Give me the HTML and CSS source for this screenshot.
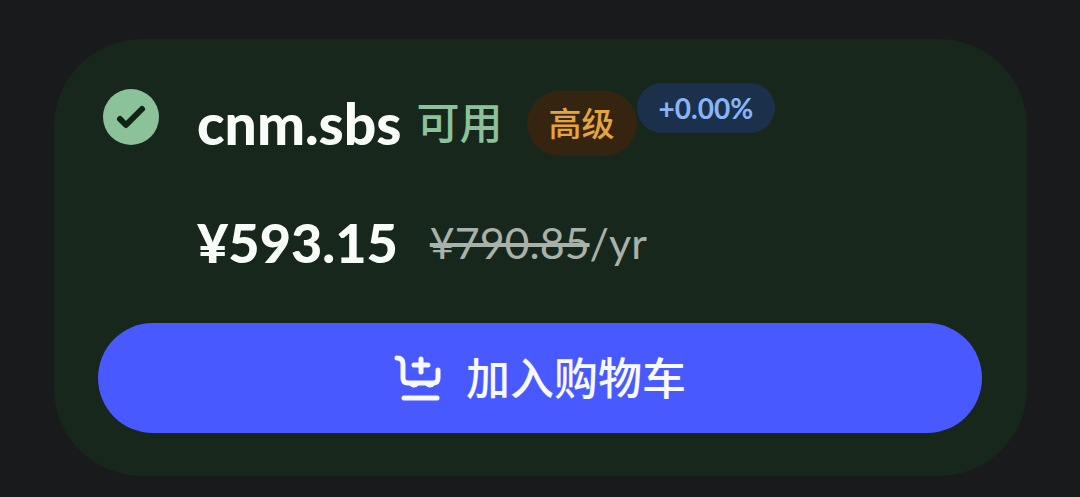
FILE: index.html
```
<!DOCTYPE html>
<html lang="zh">
<head>
    <title>cnm.sbs</title>
    <meta charset="UTF-8">
    <meta name="viewport" content="width=device-width, initial-scale=1">
    <link rel="stylesheet" href="styles.css">
</head>
<body>
    <div class="card">
        <div class="result">
            <svg class="check" viewBox="0 0 56 56" aria-hidden="true">
                <circle cx="28" cy="28" r="28" fill="#8cc29a"/>
                <path d="M17 30l6 6 16-16" fill="none" stroke="#0f2412" stroke-width="6" stroke-linecap="round" stroke-linejoin="round"/>
            </svg>
            <div class="info">
                <div class="title">
                    <span class="domain">cnm.sbs</span>
                    <span class="status">可用</span>
                    <span class="badge premium">高级</span>
                    <span class="badge change">+0.00%</span>
                </div>
                <div class="price">
                    <span class="now">¥593.15</span>
                    <span class="old"><del>¥790.85</del>/yr</span>
                </div>
            </div>
        </div>
        <button class="add" type="button">
            <svg class="cart" viewBox="0 0 48 48" aria-hidden="true">
                <g fill="none" stroke="#f8f8ff" stroke-width="5" stroke-linecap="round" stroke-linejoin="round">
                    <path d="M3 6q6 0 6 6v14q0 5 5 5h25q5 0 5-5v-8"/>
                    <path d="M27 7v13M20 13h14M10 46h33"/>
                </g>
                <path d="M14 32h12q-6 7-12 0zM30 32h12q-6 7-12 0z" fill="#f8f8ff"/>
            </svg>
            <span>加入购物车</span>
        </button>
    </div>
</body>
</html>
```
FILE: styles.css
```
* {
    box-sizing: border-box;
}
body {
    margin: 0;
    padding: 39px 53px 21px 54px;
    background: #191a1c;
    color: #f8fdf9;
    font-family: Lato, "Noto Sans CJK SC", sans-serif;
}
.card {
    padding: 44px 45px 43px 44px;
    border-radius: 88px;
    background: #18271c;
}
.result {
    display: flex;
    align-items: flex-start;
    gap: 38px;
    padding-left: 5px;
}
.check {
    flex: none;
    width: 56px;
    height: 56px;
    margin-top: 6px;
}
.title {
    display: flex;
    align-items: flex-start;
    white-space: nowrap;
}
.domain {
    margin-right: 15px;
    font-size: 57px;
    font-weight: 900;
    line-height: 80px;
}
.status {
    margin-right: 24px;
    color: #8cc29a;
    font-size: 43px;
    font-weight: 500;
    line-height: 80px;
}
.badge {
    border-radius: 33px;
}
.premium {
    margin-top: 8px;
    padding: 0 22px;
    background: #35240f;
    color: #e5a53d;
    font-size: 33px;
    font-weight: 500;
    line-height: 65px;
}
.change {
    padding: 0 22px;
    background: #1b314b;
    color: #8ab4f8;
    font-size: 28px;
    font-weight: 700;
    line-height: 50px;
}
.price {
    display: flex;
    align-items: center;
    gap: 32px;
    margin-top: 40px;
    line-height: 80px;
    white-space: nowrap;
}
.now {
    font-size: 54px;
    font-weight: 900;
}
.old {
    color: #a8b1aa;
    font-size: 43px;
}
.old del {
    text-decoration-thickness: 4px;
}
.add {
    display: flex;
    align-items: center;
    justify-content: center;
    gap: 24px;
    width: 100%;
    height: 110px;
    margin-top: 40px;
    padding: 0 0 4px;
    border: 0;
    border-radius: 55px;
    background: #485aff;
    color: #f8f8ff;
    font-family: inherit;
    font-size: 44px;
    font-weight: 500;
    cursor: pointer;
}
.cart {
    width: 48px;
    height: 48px;
    overflow: visible;
}
```
